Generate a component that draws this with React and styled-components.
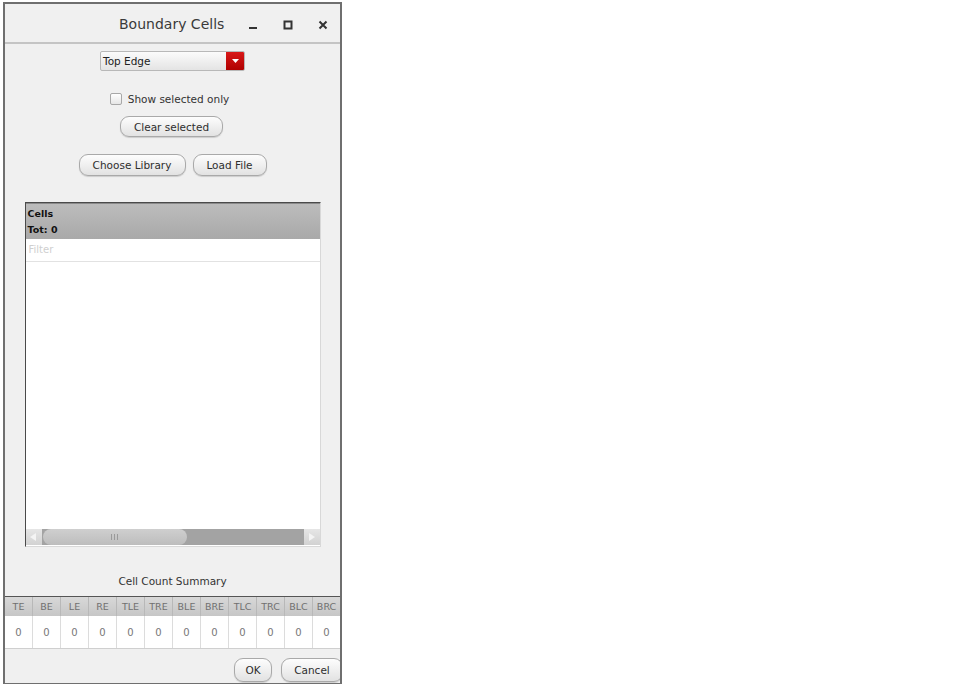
import styled, { createGlobalStyle } from "styled-components";

const Global = createGlobalStyle`
  html, body {
    margin: 0;
    background: #ffffff;
  }
  body {
    font-family: "DejaVu Sans", "Noto Sans", sans-serif;
  }
`;

const Window = styled.div`
  box-sizing: border-box;
  margin: 2px 0 0 3px;
  width: 339px;
  height: 682px;
  border: 2px solid #6f6f6f;
  border-bottom-width: 1px;
  background: #f0f0f0;
  display: flex;
  flex-direction: column;
  overflow: hidden;
`;

const TitleBar = styled.div`
  height: 38px;
  flex-shrink: 0;
  display: flex;
  align-items: center;
  border-bottom: 2px solid #c4c4c4;
  position: relative;
`;

const Title = styled.div`
  position: absolute;
  left: 114px;
  top: 12px;
  font-size: 14px;
  color: #3a3a3a;
`;

const WinButtons = styled.div`
  margin-left: auto;
  margin-top: 4px;
  display: flex;
  align-items: center;
`;

const WinBtn = styled.div`
  width: 35px;
  height: 30px;
  display: flex;
  align-items: center;
  justify-content: center;
`;

const Body = styled.div`
  flex: 1;
  display: flex;
  flex-direction: column;
  align-items: center;
`;

const Select = styled.div`
  margin-top: 7px;
  width: 145px;
  height: 20px;
  box-sizing: border-box;
  display: flex;
  border: 1px solid #b8b8b8;
  border-radius: 2px;
  background: linear-gradient(#fbfbfb, #e4e4e4);
  overflow: hidden;
`;

const SelectText = styled.div`
  flex: 1;
  font-size: 10.5px;
  color: #222;
  padding: 3px 0 0 2px;
`;

const SelectArrow = styled.div`
  width: 18px;
  background: linear-gradient(#d81818, #b00000);
  display: flex;
  align-items: center;
  justify-content: center;
`;

const CheckRow = styled.div`
  margin-top: 22px;
  margin-left: -6px;
  display: flex;
  align-items: center;
  gap: 6px;
  font-size: 10.5px;
  color: #333;
`;

const Box = styled.div`
  width: 10px;
  height: 10px;
  border: 1px solid #a8a8a8;
  border-radius: 2px;
  background: linear-gradient(#ffffff, #e6e6e6);
`;

const ButtonRow = styled.div`
  margin-top: ${(p) => p.$mt}px;
  margin-left: ${(p) => p.$ml || 0}px;
  display: flex;
  gap: 7px;
`;

const Button = styled.div`
  box-sizing: border-box;
  height: ${(p) => p.$h || 22}px;
  width: ${(p) => p.$w}px;
  border: 1px solid #a9a9a9;
  border-radius: 9px;
  background: linear-gradient(#fdfdfd, #e2e2e2);
  box-shadow: 0 1px 1px rgba(0, 0, 0, 0.15);
  display: flex;
  align-items: center;
  justify-content: center;
  font-size: 10.5px;
  color: #2e2e2e;
`;

const ListPanel = styled.div`
  margin-top: 26px;
  width: 296px;
  height: 345px;
  box-sizing: border-box;
  border: 1px solid #4a4a4a;
  border-right-color: #d8d8d8;
  border-bottom-color: #d8d8d8;
  background: #ffffff;
  display: flex;
  flex-direction: column;
`;

const ListHeader = styled.div`
  height: 36px;
  background: linear-gradient(#bcbcbc, #a9a9a9);
  font-size: 9.5px;
  font-weight: bold;
  color: #111;
  padding: 2px 0 0 2px;
  box-sizing: border-box;
  line-height: 16px;
  border-top: 1px solid #8a8a8a;
`;

const Filter = styled.div`
  height: 23px;
  box-sizing: border-box;
  border-bottom: 1px solid #e2e2e2;
  font-size: 10px;
  color: #cfcfcf;
  padding: 5px 0 0 3px;
`;

const ListBody = styled.div`
  flex: 1;
`;

const ScrollBar = styled.div`
  height: 16px;
  display: flex;
  background: #a3a3a3;
  margin-bottom: 1px;
`;

const ScrollArrow = styled.div`
  width: 16px;
  background: linear-gradient(#e6e6e6, #d2d2d2);
  display: flex;
  align-items: center;
  justify-content: center;
`;

const Thumb = styled.div`
  margin-left: 1px;
  width: 144px;
  border-radius: 8px;
  background: linear-gradient(#cfcfcf, #bdbdbd);
  display: flex;
  align-items: center;
  justify-content: center;
  gap: 2px;
`;

const Grip = styled.span`
  width: 1px;
  height: 6px;
  background: #9a9a9a;
`;

const Gap = styled.div`
  flex: 1;
`;

const Summary = styled.div`
  margin-top: 28px;
  font-size: 10.5px;
  color: #333;
`;

const Table = styled.div`
  margin-top: 9px;
  align-self: stretch;
  display: grid;
  grid-template-columns: repeat(12, 1fr);
  border-top: 1px solid #555;
  border-bottom: 1px solid #cfcfcf;
  margin-right: -1px;
`;

const HeadCell = styled.div`
  height: 19px;
  background: linear-gradient(#d8d8d8, #c6c6c6);
  border-right: 1px solid #b8b8b8;
  font-size: 9.5px;
  color: #707070;
  display: flex;
  align-items: center;
  justify-content: center;
`;

const ValCell = styled.div`
  height: 32px;
  background: #fff;
  border-right: 1px solid #dcdcdc;
  font-size: 10px;
  color: #777;
  display: flex;
  align-items: center;
  justify-content: center;
`;

const Footer = styled.div`
  align-self: stretch;
  display: flex;
  justify-content: flex-end;
  gap: 9px;
  margin-top: 9px;
  margin-right: -3px;
`;

const cols = ["TE", "BE", "LE", "RE", "TLE", "TRE", "BLE", "BRE", "TLC", "TRC", "BLC", "BRC"];

export default function App() {
  return (
    <>
      <Global />
      <Window>
        <TitleBar>
          <Title>Boundary Cells</Title>
          <WinButtons>
            <WinBtn>
              <svg width="10" height="10" viewBox="0 0 10 10">
                <rect x="1" y="7" width="8" height="2" fill="#333" />
              </svg>
            </WinBtn>
            <WinBtn>
              <svg width="10" height="10" viewBox="0 0 10 10">
                <rect x="1.5" y="1.5" width="7" height="7" fill="none" stroke="#333" strokeWidth="2" />
              </svg>
            </WinBtn>
            <WinBtn>
              <svg width="10" height="10" viewBox="0 0 10 10">
                <path d="M1.5 1.5 L8.5 8.5 M8.5 1.5 L1.5 8.5" stroke="#333" strokeWidth="2" />
              </svg>
            </WinBtn>
          </WinButtons>
        </TitleBar>
        <Body>
          <Select>
            <SelectText>Top Edge</SelectText>
            <SelectArrow>
              <svg width="7" height="5" viewBox="0 0 7 5">
                <path d="M0 0 L7 0 L3.5 4 Z" fill="#fff" />
              </svg>
            </SelectArrow>
          </Select>
          <CheckRow>
            <Box />
            Show selected only
          </CheckRow>
          <ButtonRow $mt={11} $ml={-2}>
            <Button $w={103} $h={21}>Clear selected</Button>
          </ButtonRow>
          <ButtonRow $mt={17} $ml={0}>
            <Button $w={107}>Choose Library</Button>
            <Button $w={74}>Load File</Button>
          </ButtonRow>
          <ListPanel>
            <ListHeader>
              <div>Cells</div>
              <div>Tot: 0</div>
            </ListHeader>
            <Filter>Filter</Filter>
            <ListBody />
            <ScrollBar>
              <ScrollArrow>
                <svg width="7" height="8" viewBox="0 0 7 8">
                  <path d="M6 0 L0 4 L6 8 Z" fill="#f4f4f4" />
                </svg>
              </ScrollArrow>
              <Thumb>
                <Grip />
                <Grip />
                <Grip />
              </Thumb>
              <Gap />
              <ScrollArrow>
                <svg width="7" height="8" viewBox="0 0 7 8">
                  <path d="M1 0 L7 4 L1 8 Z" fill="#f4f4f4" />
                </svg>
              </ScrollArrow>
            </ScrollBar>
          </ListPanel>
          <Summary>Cell Count Summary</Summary>
          <Table>
            {cols.map((c) => (
              <HeadCell key={c}>{c}</HeadCell>
            ))}
            {cols.map((c) => (
              <ValCell key={c + "v"}>0</ValCell>
            ))}
          </Table>
          <Footer>
            <Button $w={38} $h={24}>OK</Button>
            <Button $w={62} $h={24}>Cancel</Button>
          </Footer>
        </Body>
      </Window>
    </>
  );
}
